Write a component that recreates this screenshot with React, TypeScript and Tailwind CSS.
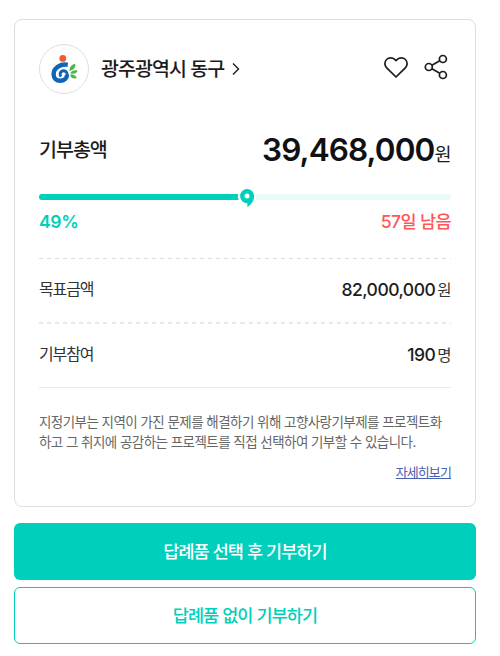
import type { ReactNode } from 'react';

const DONATION = {
  region: '광주광역시 동구',
  total: '39,468,000',
  goal: '82,000,000',
  donors: '190',
  percent: 49,
  daysLeft: 57,
};

function RegionLogo() {
  return (
    <svg viewBox="0 0 28 30" className="h-[30px] w-7" fill="none">
      <circle cx="12.8" cy="4.4" r="3.4" fill="#f15a31" />
      <path
        d="M17.8 10.8C10.6 9.6 3.6 13.6 3.6 20.2C3.6 24.4 6.4 26.8 10.2 26.8C14.2 26.8 17 24.4 17 20.8"
        stroke="#0f66b8"
        strokeWidth="4.4"
      />
      <path
        d="M17.4 21.4C17.4 17.6 14.6 16.2 12.4 17C10 17.9 9.4 20.4 11 22.6"
        stroke="#0f66b8"
        strokeWidth="3"
      />
      <path d="M19.6 17C19 13.6 21.2 10.6 25.2 9.8C26 13.4 23.6 16.2 19.6 17Z" fill="#4db848" />
      <path d="M20.2 19.2C21.6 16.6 24.6 15.6 27.8 16.8C26.4 19.6 23.4 20.6 20.2 19.2Z" fill="#4db848" />
      <path d="M20 21C22.8 19.8 25.6 21 26.8 24C23.8 25.4 21 24.2 20 21Z" fill="#4db848" />
    </svg>
  );
}

function IconHeart() {
  return (
    <svg viewBox="0 0 26 24" className="-mt-1 h-6 w-[26px]" fill="none" stroke="#1c1c1c" strokeWidth="1.7" strokeLinejoin="round">
      <path d="M13 22L3.7 12.9C1.3 10.5 1.3 6.7 3.6 4.5C5.9 2.3 9.5 2.4 11.7 4.4L13 5.6L14.3 4.4C16.5 2.4 20.1 2.3 22.4 4.5C24.7 6.7 24.7 10.5 22.3 12.9Z" />
    </svg>
  );
}

function IconShare() {
  return (
    <svg viewBox="0 0 24 26" className="-mt-1 h-[26px] w-6" fill="none" stroke="#1c1c1c" strokeWidth="1.7">
      <circle cx="4.8" cy="13" r="3.5" />
      <circle cx="18.9" cy="5" r="3.5" />
      <circle cx="18.9" cy="21" r="3.5" />
      <path d="M7.9 11.2L15.8 6.8M7.9 14.8L15.8 19.2" />
    </svg>
  );
}

function ProgressBar({ percent }: { percent: number }) {
  return (
    <div className="relative mt-[21px] h-1.5 rounded-full bg-[#e9faf9]">
      <div className="h-full rounded-full bg-[#00cfbb]" style={{ width: `${percent}%` }} />
      <svg viewBox="0 0 20 22" className="absolute -top-[7px] left-[198px] h-[22px] w-5">
        <circle cx="10" cy="9.2" r="9.2" fill="#fff" />
        <path
          d="M10 2A7.1 7.1 0 0 1 17.1 9.1C17.1 14 14.4 17.8 10.4 20V16.2A7.1 7.1 0 1 1 10 2Z"
          fill="#00cfbb"
        />
        <circle cx="10" cy="9" r="2.5" fill="#fff" />
      </svg>
    </div>
  );
}

function Row({ label, value, unit }: { label: string; value: string; unit: ReactNode }) {
  return (
    <div className="flex h-[63px] items-center justify-between text-[#333]">
      <span className="-mt-[3px] text-[16px] tracking-[-1.1px]">{label}</span>
      <span className="flex items-baseline gap-0.5">
        <span className="text-[17.5px] font-medium tracking-[-0.5px] text-[#1c1c1c]">{value}</span>
        <span className="text-[15.5px] tracking-[-0.5px]">{unit}</span>
      </span>
    </div>
  );
}

export default function App() {
  return (
    <main className="h-[656px] w-[500px] bg-white pt-[19px] pr-6 pl-3.5 font-['Inter','Noto_Sans_CJK_KR',sans-serif] text-[#1c1c1c]">
      <section className="h-[488px] rounded-lg border border-[#dedede] px-6 pt-6">
        <header className="flex h-[50px] items-center">
          <div className="flex size-[50px] items-center justify-center rounded-full border border-[#dedede]">
            <RegionLogo />
          </div>
          <h1 className="mt-0.5 ml-3 text-[19.5px] font-medium tracking-[-0.95px] whitespace-nowrap">{DONATION.region}</h1>
          <svg viewBox="0 0 8 14" className="ml-2 h-3.5 w-2" fill="none" stroke="#1c1c1c" strokeWidth="1.4">
            <path d="M1 1.5L6.5 7L1 12.5" />
          </svg>
          <div className="mr-[3px] ml-auto flex items-center gap-[15px]">
            <IconHeart />
            <IconShare />
          </div>
        </header>

        <div className="mt-[31px] flex h-12 items-center justify-between">
          <h2 className="mt-1 text-[19.5px] font-medium tracking-[-1px]">기부총액</h2>
          <p className="mt-0.5 flex items-baseline">
            <span className="text-[31.5px] font-semibold tracking-[-0.9px] text-[#111]">{DONATION.total}</span>
            <span className="text-[18.5px] tracking-[-0.5px]">원</span>
          </p>
        </div>

        <ProgressBar percent={DONATION.percent} />
        <div className="mt-2 mb-[22px] flex h-7 items-center justify-between text-[17.5px] font-medium">
          <span className="font-semibold tracking-[-0.3px] text-[#00cfbb]">{DONATION.percent}%</span>
          <span className="tracking-[-0.6px] text-[#ff5656]">{DONATION.daysLeft}일 남음</span>
        </div>

        <div className="h-px bg-[repeating-linear-gradient(90deg,#dedede_0_4px,transparent_4px_8.06px)]" />
        <Row label="목표금액" value={DONATION.goal} unit="원" />
        <div className="h-0.5 bg-[repeating-linear-gradient(90deg,#e9e9e9_0_4px,transparent_4px_8.06px)]" />
        <Row label="기부참여" value={DONATION.donors} unit="명" />

        <div className="border-t border-[#ebebeb] pt-6">
          <p className="text-[13.5px] leading-5 tracking-[-0.55px] whitespace-nowrap text-[#666]">
            지정기부는 지역이 가진 문제를 해결하기 위해 고향사랑기부제를 프로젝트화
            <br />
            하고 그 취지에 공감하는 프로젝트를 직접 선택하여 기부할 수 있습니다.
          </p>
          <div className="mt-2.5 text-right text-[13px] leading-5 tracking-[-0.9px]">
            <a className="text-[#4a60b0] underline">자세히보기</a>
          </div>
        </div>
      </section>

      <div className="mt-4 flex flex-col gap-[7px] text-[17.5px] font-medium tracking-[-0.87px]">
        <button className="h-[57px] rounded-md bg-[#00cfbb] pt-px text-white">답례품 선택 후 기부하기</button>
        <button className="h-[57px] rounded-md border border-[#00cfbb] pt-px text-[#00cfbb]">답례품 없이 기부하기</button>
      </div>
    </main>
  );
}
